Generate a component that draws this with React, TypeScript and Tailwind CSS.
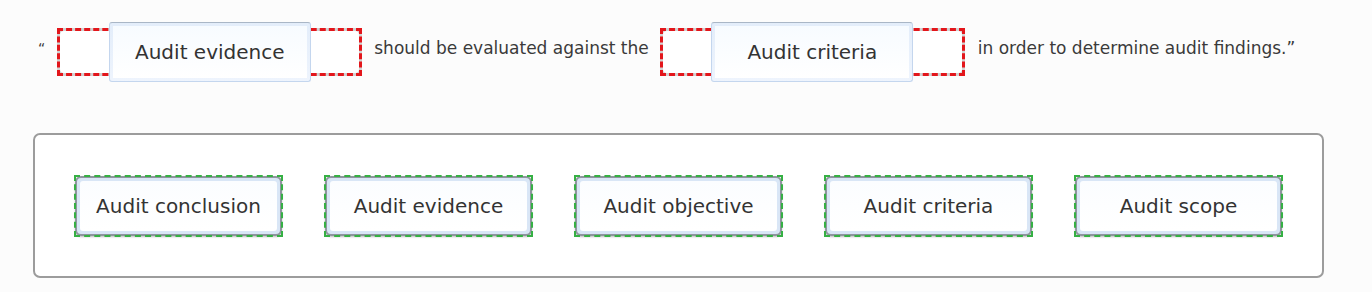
const options = ['Audit conclusion', 'Audit evidence', 'Audit objective', 'Audit criteria', 'Audit scope']

// green dashed marker is a square frame just outside the rounded chip
const Chip = ({ label }: { label: string }) => (
  <div className="relative h-[60px] w-[207px] rounded-[6px] border-2 border-[#8f959e] bg-[#d9e6f6] p-[3px] shadow-[0_1px_2px_rgba(0,0,0,0.25)] after:absolute after:inset-[-3px] after:border-2 after:border-dashed after:border-[#36b044] after:content-['']">
    <div className="flex h-full w-full items-center justify-center rounded-[3px] bg-gradient-to-b from-[#fbfdff] to-white text-[20px] text-[#333]">
      {label}
    </div>
  </div>
)

// red dashed marker sits on top of the grey slot, the dropped chip sits above both
const DropZone = ({ label }: { label: string }) => (
  <div className="relative flex h-[48px] w-[305px] items-center justify-center rounded-[7px] border-[3px] border-[#d2d2d2] bg-white after:absolute after:inset-[-3px] after:border-[3px] after:border-dashed after:border-[#e3161b] after:content-['']">
    <div className="relative z-10 flex h-[60px] w-[202px] shrink-0 items-center justify-center rounded-[3px] border border-t-[#a9b6c6] border-x-[#c4d6ee] border-b-[#c4d6ee] bg-gradient-to-b from-[#e3edfa] to-[#eef4fd] p-[3px]">
      <div className="flex h-full w-full items-center justify-center bg-gradient-to-b from-[#f7fbff] to-white text-[20px] text-[#333]">
        {label}
      </div>
    </div>
  </div>
)

export default function App() {
  return (
    <div
      className="h-[292px] w-[1372px] overflow-hidden bg-[#fcfcfc] pt-[22px] text-[#3a3a3a]"
      style={{ fontFamily: '"DejaVu Sans", sans-serif' }}
    >
      <div className="flex h-[60px] items-center pl-[38px] text-[17px]">
        <span className="mr-[12px] -mt-[8px] text-[14px]">“</span>
        <DropZone label="Audit evidence" />
        <span className="ml-[12px] mr-[11px] -mt-[6px]">should be evaluated against the</span>
        <DropZone label="Audit criteria" />
        <span className="ml-[13px] -mt-[6px]">in order to determine audit findings.”</span>
      </div>

      <div className="ml-[33px] mt-[51px] flex h-[145px] w-[1291px] items-center justify-between rounded-[7px] border-2 border-[#9c9c9c] bg-white px-[40px]">
        {options.map((o) => (
          <Chip key={o} label={o} />
        ))}
      </div>
    </div>
  )
}
